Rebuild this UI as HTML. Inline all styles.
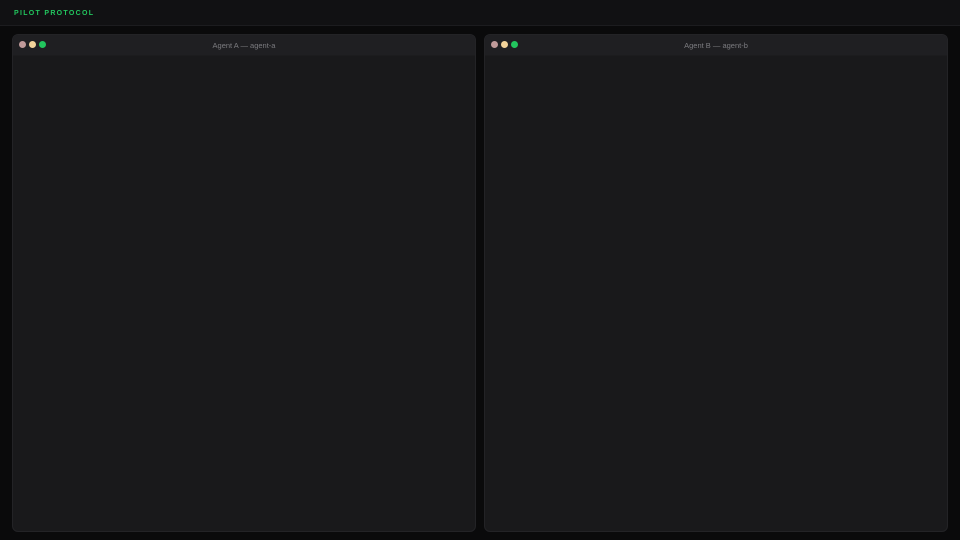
<!DOCTYPE html>
<html><head><meta charset="utf-8"><style>
*{margin:0;padding:0;box-sizing:border-box}
html,body{width:960px;height:540px;background:#0a0a0b;overflow:hidden;font-family:"Liberation Sans",sans-serif}
.hdr{position:absolute;left:0;top:0;width:960px;height:26px;background:#111113;border-bottom:1px solid #1c1c1f}
.logo{position:absolute;left:14px;top:10px;font-size:7px;font-weight:bold;letter-spacing:1.3px;color:#22c55e}
.win{position:absolute;top:34px;width:464px;height:498px;background:#19191b;border:1px solid #232326;border-radius:6px;overflow:hidden}
.bar{height:21px;background:#1f1f22;border-bottom:1px solid #1c1c1e;position:relative}
.d{position:absolute;top:6px;width:7px;height:7px;border-radius:50%}
.t{position:absolute;left:0;right:0;top:6px;text-align:center;font-size:7.5px;color:#7c7c80}
</style></head><body>
<div class="hdr"><div class="logo">PILOT PROTOCOL</div></div>
<div class="win" style="left:12px">
<div class="bar"><span class="d" style="left:6px;background:#c09a9a"></span><span class="d" style="left:16px;background:#f2d39a"></span><span class="d" style="left:26px;background:#22c55e"></span><div class="t">Agent A — agent-a</div></div>
</div>
<div class="win" style="left:484px">
<div class="bar"><span class="d" style="left:6px;background:#c09a9a"></span><span class="d" style="left:16px;background:#f2d39a"></span><span class="d" style="left:26px;background:#22c55e"></span><div class="t">Agent B — agent-b</div></div>
</div>
</body></html>
